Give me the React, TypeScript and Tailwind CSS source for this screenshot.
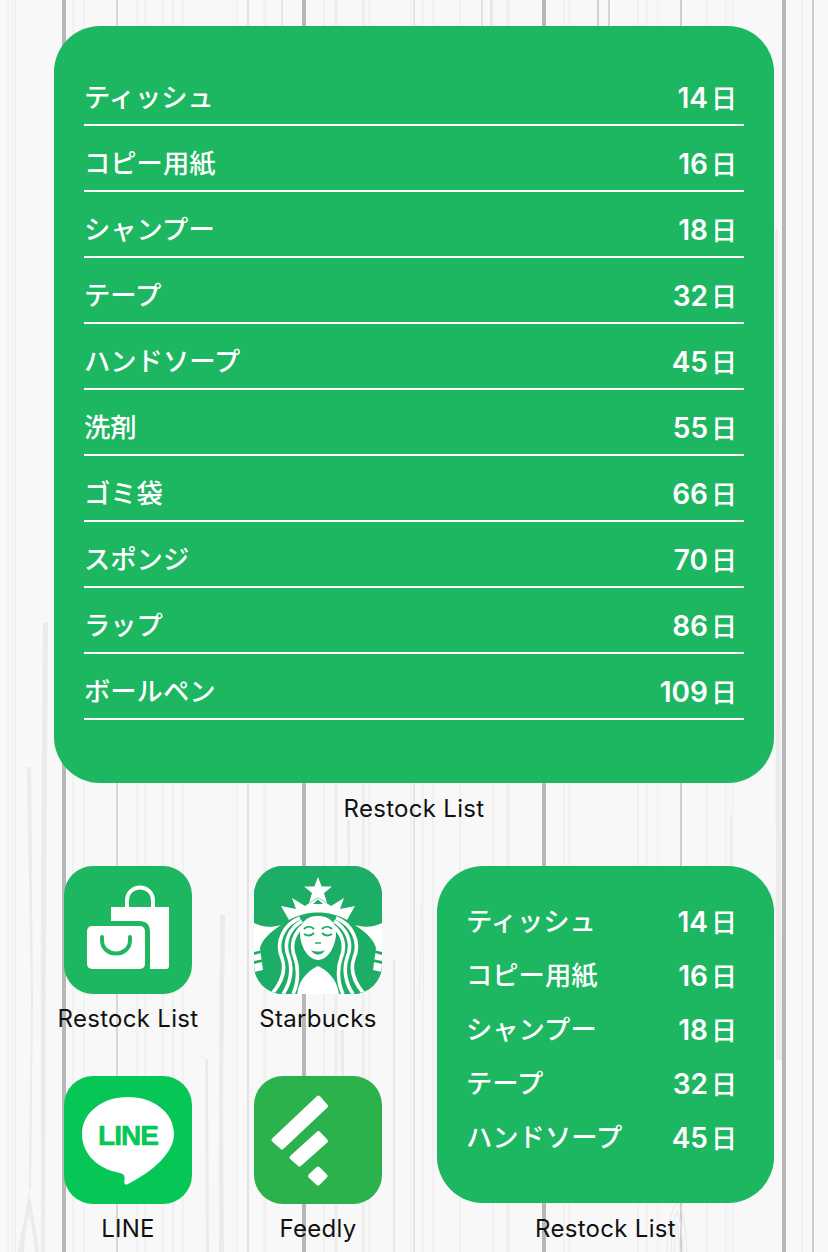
import React from "react";

const big = [
  ["ティッシュ", "14"],
  ["コピー用紙", "16"],
  ["シャンプー", "18"],
  ["テープ", "32"],
  ["ハンドソープ", "45"],
  ["洗剤", "55"],
  ["ゴミ袋", "66"],
  ["スポンジ", "70"],
  ["ラップ", "86"],
  ["ボールペン", "109"],
];

const jp = "font-['Inter','Noto_Sans_CJK_JP',sans-serif]";

function Wallpaper() {
  const dark = [64, 304, 544, 784];
  const mid: [number, number, string, number, number][] = [
    [117, 2, "#d6d6d6", 0, 1252], [248, 1.5, "#dcdcdc", 0, 1252], [282, 1.5, "#e0e0e0", 0, 100], [482, 1.5, "#dcdcdc", 0, 100], [491, 1.5, "#dcdcdc", 0, 100],
    [598, 2, "#cfcfcf", 0, 100], [609, 2, "#d4d4d4", 0, 100], [681, 2, "#cfcfcf", 0, 1252], [813, 2, "#cccccc", 0, 1252], [414, 1.5, "#e0e0e0", 0, 1252],
    [394, 1.5, "#e4e4e4", 960, 1252],
  ];
  const light: [number, number][] = [
    [8, 1], [12, 1], [15, 1.5], [73, 1.5], [84, 1.5], [137, 1.5], [145, 1.5], [163, 1.5], [173, 2], [183, 1.5],
    [237, 1], [265, 3], [324, 2], [336, 3.5], [364, 1.5], [369, 1.5], [411, 1.5], [423, 1.5], [363, 3],
    [433, 1.5], [460, 1.5], [493, 1.5], [508, 3], [564, 1.5], [569, 1.5], [638, 1.5], [647, 1.5], [658, 1], [707, 1.5], [726, 1], [733, 1], [802, 1.5],
  ];
  const wedges = [
    "M43 623 L48 623 L46 900 L45 1252 L41 1252 L41 900 Z",
    "M27 767 L31 767 L33 1000 L31 1190 L29 1190 L31 1000 Z",
    "M29 1190 C26 1215 20 1235 18 1252 L24 1252 C25 1230 27 1222 29 1215 C31 1222 34 1235 35 1252 L39 1252 C36 1230 32 1210 29 1190 Z",
    "M220 915 L225 915 L223 1100 L224 1252 L219 1252 L219 1100 Z",
    "M205 1059 L208 1059 L209 1252 L206 1252 Z",
    "M347 820 L350 820 L350 866 L348 866 Z",
    "M340 1030 L344 1030 L344 1076 L341 1076 Z",
    "M421 900 L422 900 L420 1000 L419 1000 Z",
    "M775 230 L778 230 L782 1060 L776 1060 Z",
    "M730 815 L732 815 L732 866 L730 866 Z",
  ];
  return (
    <svg className="absolute inset-0" width="828" height="1252" aria-hidden="true">
      {light.map(([x, w]) => <line key={x} x1={x} x2={x} y1="0" y2="1252" stroke="#efefef" strokeWidth={w} />)}
      {wedges.map((d) => <path key={d} d={d} fill="#ebebeb" />)}
      {mid.map(([x, w, c, a, b]) => <line key={x} x1={x} x2={x} y1={a} y2={b} stroke={c} strokeWidth={w} />)}
      {dark.map((x) => <line key={x} x1={x} x2={x} y1="0" y2="1252" stroke="#b7b7b7" strokeWidth="4" />)}
      <g fill="none" stroke="#e8e8e8" strokeWidth="1">
        <path d="M667 1252 C668 1225 672 1206 677 1203 C682 1206 686 1225 687 1252" />
        <path d="M671 1252 C672 1230 674 1216 677 1212 C680 1216 682 1230 683 1252" />
        <path d="M674 1252 C675 1236 676 1226 677 1222 C678 1226 679 1236 680 1252" />
      </g>
    </svg>
  );
}

function BagIcon() {
  return (
    <svg viewBox="0 0 128 128" className="w-full h-full" aria-hidden="true">
      <path d="M63 41 V35 C63 17 89 17 89 35 V41" fill="none" stroke="#fff" strokeWidth="4" />
      <path d="M47 41 H105 V100 Q105 103 102 103 H86 V66 Q86 55 75 55 H47 Z" fill="#fff" />
      <rect x="23" y="60" width="58" height="43" rx="5" fill="#fff" />
      <path d="M38 71 V74 C38 92 66 92 66 74 V71" fill="none" stroke="#1db661" strokeWidth="4" strokeLinecap="round" />
    </svg>
  );
}

function StarbucksIcon() {
  const g = "#1cae67";
  const side = (
    <g>
      <path d="M0 57 C8 61 16 62 27 59 C16 66 8 74 6 82 L9 104 L0 106 Z" fill="#fff" />
      <path d="M0 86 L9 84 L9 86.5 L0 89 Z M0 95 L10 93 L10 95.5 L0 98 Z" fill={g} />
      <path d="M46 52 C30 58 21 76 28 92 C32 103 28 116 18 128" fill="none" stroke="#fff" strokeWidth="3.6" />
      <path d="M48 55 C36 62 28 76 35 92 C39 104 36 118 29 128" fill="none" stroke="#fff" strokeWidth="3.6" />
      <path d="M50 59 C41 66 35 78 41 92 C45 103 44 118 39 128" fill="none" stroke="#fff" strokeWidth="3.6" />
    </g>
  );
  return (
    <svg viewBox="0 0 128 128" className="w-full h-full" aria-hidden="true">
      <rect width="128" height="128" fill={g} />
      {side}
      <g transform="translate(128 0) scale(-1 1)">{side}</g>
      <path d="M64 11 L67.6 20.5 L78 20.5 L70 27 L73 37 L64 31.5 L55 37 L58 27 L50 20.5 L60.4 20.5 Z" fill="#fff" />
      <path d="M27 40 L42 43 L38 32 L51 40 L54 38 L64 32 L74 38 L77 40 L90 32 L86 43 L101 40 L93 54 C76 44 52 44 35 54 Z" fill="#fff" />
      <path d="M59 38 L64 33.5 L69 38 Z" fill={g} />
      <path d="M64 50 C75 50 82 56 82 67 C82 80 74 94 64 94 C54 94 46 80 46 67 C46 56 53 50 64 50 Z" fill="#fff" />
      <path d="M43 128 C45 113 55 104 64 100 C73 104 83 113 85 128 Z" fill="#fff" />
      <path d="M50 63 C53 60 57 60 60 63 M68 63 C71 60 75 60 78 63 M50 68 C53 70 57 70 60 67 M68 67 C71 70 75 70 78 68" fill="none" stroke={g} strokeWidth="2" />
      <path d="M57 84 C61 86 67 86 71 84 C68 90 60 90 57 84 Z" fill={g} />
      <path d="M61 77 H67" stroke={g} strokeWidth="1.4" />
    </svg>
  );
}

function LineIcon() {
  return (
    <svg viewBox="0 0 128 128" className="w-full h-full" aria-hidden="true">
      <path d="M64 21 C90 21 110 37 110 58 C110 76 90 95 64 108 C60 110 60 106 60.5 103 C61 100 60 98 56 97 C34 93 18 78 18 58 C18 37 38 21 64 21 Z" fill="#fff" />
      <text x="64" y="69" textAnchor="middle" fontFamily="Liberation Sans, sans-serif" fontWeight="700" fontSize="28" letterSpacing="-1" stroke="#06c755" strokeWidth="0.6" fill="#06c755">LINE</text>
    </svg>
  );
}

function FeedlyIcon() {
  return (
    <svg viewBox="0 0 128 128" className="w-full h-full" aria-hidden="true">
      <g fill="#fff" stroke="#fff" strokeWidth="4" strokeLinejoin="round">
        <path d="M64.5 21.5 L72 30 L28 71.5 L19.5 64 Z" />
        <path d="M64.5 57 L72 65 L45.5 88.5 L37.5 81.5 Z" />
        <path d="M64 92.5 L71.5 100 L64 107.5 L56 100 Z" />
      </g>
    </svg>
  );
}

function Label({ children, className = "" }: { children: React.ReactNode; className?: string }) {
  return <div className={`text-[24px] leading-[28px] text-[#111] tracking-[0.3px] font-['Inter',sans-serif] whitespace-nowrap ${className}`}>{children}</div>;
}

function Icon({ bg, label, children }: { bg: string; label: string; children: React.ReactNode }) {
  return (
    <div className="flex flex-col items-center w-[190px] h-[210px]">
      <div className={`w-[128px] h-[128px] rounded-[29px] overflow-hidden ${bg}`}>{children}</div>
      <Label className="mt-[11px]">{label}</Label>
    </div>
  );
}

function Days({ d }: { d: string }) {
  return (
    <span className="flex items-baseline">
      <span className="text-[28px] font-semibold">{d}</span>
      <span className="ml-[3px] text-[26px] font-medium">日</span>
    </span>
  );
}

export default function App() {
  return (
    <div className={`relative w-[828px] h-[1252px] overflow-hidden bg-[#f8f8f8] ${jp}`}>
      <Wallpaper />
      <div className="relative pt-[26px]">
        <div className="ml-[54px] w-[720px] h-[757px] rounded-[46px] bg-[#1db661] px-[30px] pt-[34px]">
          {big.map(([n, d]) => (
            <div key={n} className="h-[66px] flex items-center justify-between border-b-2 border-white pr-[7px] pt-[12px] text-white font-medium text-[26.3px] leading-none">
              <span>{n}</span>
              <Days d={d} />
            </div>
          ))}
        </div>
        <Label className="text-center mt-[12px] h-[28px]">Restock List</Label>
        <div className="flex mt-[43px] pl-[33px]">
          <div className="grid grid-cols-[190px_190px] w-[380px]">
            <Icon bg="bg-[#1db661]" label="Restock List"><BagIcon /></Icon>
            <Icon bg="bg-[#1cae67]" label="Starbucks"><StarbucksIcon /></Icon>
            <Icon bg="bg-[#06c755]" label="LINE"><LineIcon /></Icon>
            <Icon bg="bg-[#2bb24c]" label="Feedly"><FeedlyIcon /></Icon>
          </div>
          <div className="ml-[24px] w-[337px] flex flex-col items-center">
            <div className="w-[337px] h-[337px] rounded-[46px] bg-[#1db661] pl-[29px] pr-[37px] pt-[29px]">
              {big.slice(0, 5).map(([n, d]) => (
                <div key={n} className="h-[54px] flex items-center justify-between text-white font-medium text-[26.3px] leading-none">
                  <span>{n}</span>
                  <Days d={d} />
                </div>
              ))}
            </div>
            <Label className="mt-[12px]">Restock List</Label>
          </div>
        </div>
      </div>
    </div>
  );
}
